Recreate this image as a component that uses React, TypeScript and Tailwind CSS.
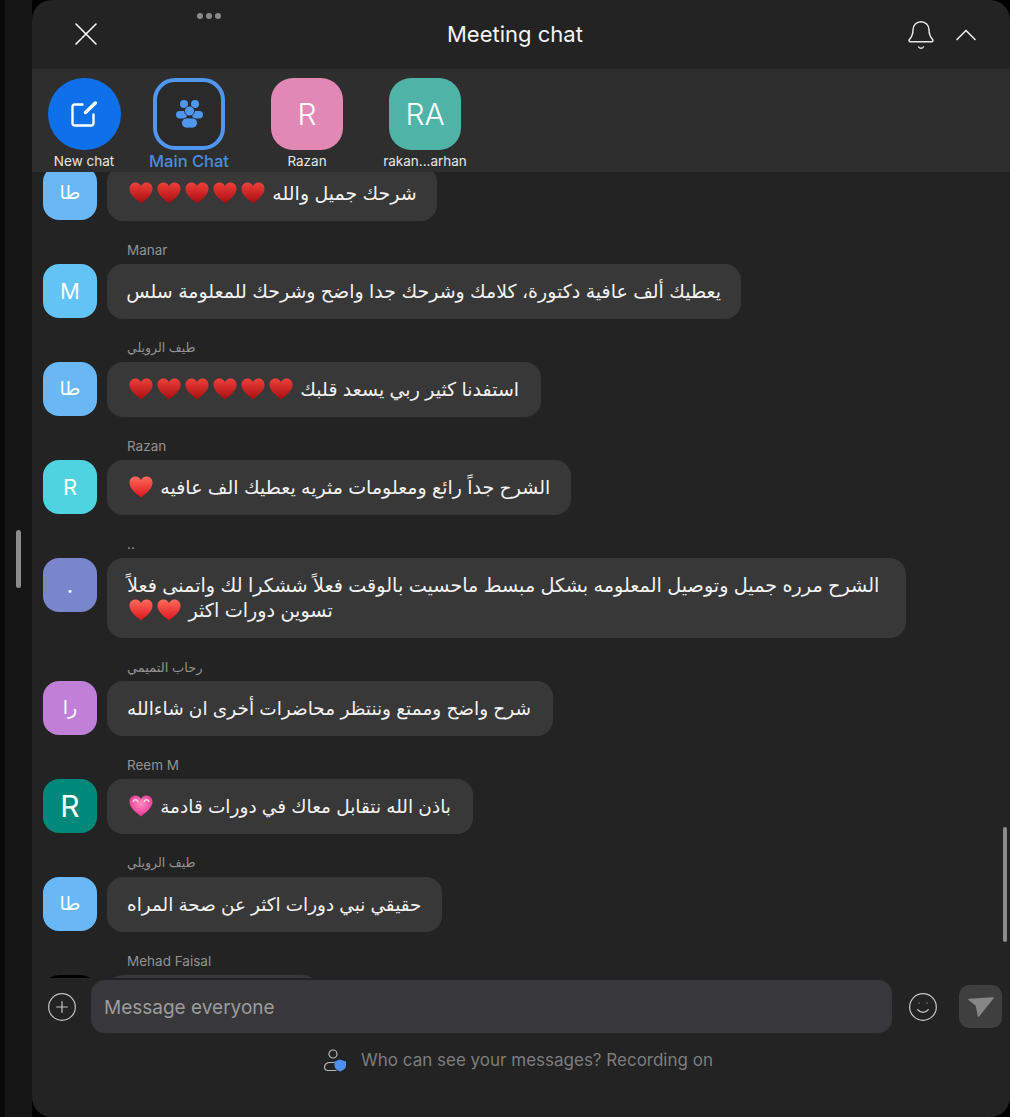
import { Bell, ChevronUp, CirclePlus, Smile } from "lucide-react";
import type { ReactNode } from "react";

const TEXT_FONT = "font-['Inter','Noto_Sans','DejaVu_Sans',sans-serif]";
const HEART_PATH =
  "M13 23.500C8.500 19.500 .5 14.500 .5 7.500 .5 3 3.500 .5 7 .5 9.800 .5 12 2 13 4.500 14 2 16.200 .5 19 .5 22.500 .5 25.500 3 25.500 7.500 25.500 14.500 17.500 19.500 13 23.500Z";

function Heart({ dark = false }: { dark?: boolean }) {
  const id = dark ? "heart-dark" : "heart-bright";
  return (
    <svg viewBox="-1 -1 28 26" className="mx-[1px] inline-block h-[24px] w-[26px] align-[-5px]">
      <defs>
        <linearGradient id={id} x1="0" y1="0" x2="0" y2="1">
          <stop offset="0" stopColor={dark ? "#f0403a" : "#ff6a5c"} />
          <stop offset="1" stopColor={dark ? "#a60d10" : "#dc151d"} />
        </linearGradient>
      </defs>
      <path d={HEART_PATH} fill={`url(#${id})`} />
    </svg>
  );
}

function PinkHeart() {
  return (
    <svg viewBox="-1 -1 28 26" className="mx-[1px] inline-block h-[24px] w-[26px] align-[-5px]">
      <defs>
        <radialGradient id="heart-pink" cx="0.5" cy="0.4" r="0.6">
          <stop offset="0" stopColor="#ff8cc3" />
          <stop offset="1" stopColor="#e8338c" />
        </radialGradient>
      </defs>
      <path d={HEART_PATH} fill="url(#heart-pink)" />
      <path d="M4.500 7C5.500 4.500 8.500 4.500 9.500 7M16.500 7C17.500 4.500 20.500 4.500 21.500 7" fill="none" stroke="#ffd3e6" strokeWidth="1.600" strokeLinecap="round" />
    </svg>
  );
}

function Message({
  name,
  nameClass = "text-[13.5px]",
  initial,
  initialClass = "text-[22px]",
  color,
  width,
  textClass = "text-[19px]",
  children,
}: {
  name?: string;
  nameClass?: string;
  initial: string;
  initialClass?: string;
  color: string;
  width: string;
  textClass?: string;
  children: ReactNode;
}) {
  return (
    <div className="mb-[21px]">
      {name && (
        <div className={`mb-[6px] ml-[95px] h-[16px] leading-[16px] text-[#929292] ${nameClass} ${TEXT_FONT}`}>
          {name}
        </div>
      )}
      <div className="ml-[11px] flex items-start gap-[10px]">
        <div
          className={`flex h-[54px] w-[54px] shrink-0 items-center justify-center rounded-[16px] text-white ${initialClass} ${color} ${TEXT_FONT}`}
        >
          {initial}
        </div>
        <div
          dir="rtl"
          className={`rounded-[16px] bg-[#383838] px-[20px] py-[15px] text-left leading-[25px] whitespace-nowrap text-[#f2f2f2] ${textClass} ${width} ${TEXT_FONT}`}
        >
          {children}
        </div>
      </div>
    </div>
  );
}

function TabItem({
  label,
  labelClass = "text-[13.5px] text-[#e6e6e6]",
  className = "",
  children,
}: {
  label: string;
  labelClass?: string;
  className?: string;
  children: ReactNode;
}) {
  return (
    <div className={`flex w-[72px] flex-col items-center ${className}`}>
      {children}
      <span className={`mt-[2px] leading-[18px] whitespace-nowrap ${labelClass}`}>{label}</span>
    </div>
  );
}

export default function App() {
  return (
    <div className="relative flex h-[1117px] w-[1010px] overflow-hidden bg-black font-['Inter',sans-serif]">
      {/* sidebar behind the panel */}
      <div className="h-full w-[5px] bg-[#0a0a0a]" />
      <div className="h-full w-[27px] bg-[#161616]" />
      <div className="absolute top-[530px] left-[16px] h-[58px] w-[5px] rounded-full bg-[#8c8c8c]" />

      <div className="relative flex h-full flex-1 flex-col overflow-hidden rounded-[20px] bg-[#232323]">
        {/* header */}
        <div className="relative flex h-[69px] shrink-0 items-center justify-between pr-[26px] pl-[42px]">
          <svg viewBox="0 0 24 24" className="mb-[2px] h-[24px] w-[24px]" fill="none" stroke="white" strokeWidth="1.600" strokeLinecap="round">
            <path d="M2 2 22 22M22 2 2 22" />
          </svg>
          <span className="absolute top-[18px] left-[415px] text-[22px] leading-[32px] text-[#f4f4f4]">Meeting chat</span>
          <div className="flex items-center gap-[11px]">
            <Bell size={32} strokeWidth={1.1} className="text-[#e8e8e8]" />
            <ChevronUp size={36} strokeWidth={1.1} className="text-[#e8e8e8]" />
          </div>
          <div className="absolute top-[13px] left-[165px] flex gap-[3px]">
            <span className="h-[6px] w-[6px] rounded-full bg-[#8a8a8a]" />
            <span className="h-[6px] w-[6px] rounded-full bg-[#8a8a8a]" />
            <span className="h-[6px] w-[6px] rounded-full bg-[#8a8a8a]" />
          </div>
        </div>

        {/* chat tabs */}
        <div className="flex h-[103px] shrink-0 bg-[#2e2e2e] pt-[9px] pl-[16px]">
          <TabItem label="New chat">
            <div className="flex h-[72px] w-[73px] shrink-0 items-center justify-center rounded-full bg-[#0e71eb]">
              <svg viewBox="0 0 26 26" className="h-[26px] w-[26px]" fill="none" stroke="white" strokeLinecap="round" strokeLinejoin="round">
                <path d="M11.500 3.500H4C2.500 3.500 1.500 4.500 1.500 6V22C1.500 23.500 2.500 24.500 4 24.500H20C21.500 24.500 22.500 23.500 22.500 22V13.500" strokeWidth="2.400" />
                <path d="M24.300 2 14.500 11.500" strokeWidth="3.400" />
              </svg>
            </div>
          </TabItem>
          <TabItem label="Main Chat" labelClass="text-[16.5px] font-medium text-[#4a8ddf]" className="ml-[33px]">
            <div className="flex h-[72px] w-[72px] items-center justify-center rounded-[22px] border-[4px] border-[#4f96ee] bg-[#2a2a2a]">
              <svg viewBox="0 0 27 28" className="h-[28px] w-[27px]">
                <circle cx="8" cy="4" r="4" fill="#4f96ee" />
                <circle cx="19" cy="4" r="4" fill="#4f96ee" />
                <rect x="0" y="11" width="11" height="7.500" rx="3.700" fill="#4f96ee" />
                <rect x="16" y="11" width="11" height="7.500" rx="3.700" fill="#4f96ee" />
                <circle cx="13.500" cy="11" r="5" fill="#4f96ee" stroke="#2a2a2a" strokeWidth="0.800" />
                <rect x="5.500" y="18" width="16" height="10" rx="5" fill="#4f96ee" stroke="#2a2a2a" strokeWidth="0.800" />
              </svg>
            </div>
          </TabItem>
          <TabItem label="Razan" className="ml-[46px]">
            <div className="flex h-[72px] w-[72px] items-center justify-center rounded-[22px] bg-[#e288b5] text-[30px] font-light text-white">R</div>
          </TabItem>
          <TabItem label="rakan...arhan" className="ml-[46px]">
            <div className="flex h-[72px] w-[72px] items-center justify-center rounded-[22px] bg-[#4fb3a7] text-[30px] font-light text-white">RA</div>
          </TabItem>
        </div>

        {/* messages */}
        <div className="relative h-[806px] shrink-0 overflow-hidden">
          <div className="-mt-[6px]">
            <Message initial="طا" initialClass="text-[19px]" color="bg-[#69b7f5]" width="w-[330px]">
              شرحك جميل والله <Heart dark /><Heart dark /><Heart dark /><Heart dark /><Heart dark />
            </Message>
            <Message name="Manar" initial="M" color="bg-[#62c3f5]" width="w-[634px]">
              يعطيك ألف عافية دكتورة، كلامك وشرحك جدا واضح وشرحك للمعلومة سلس
            </Message>
            <Message name="طيف الرويلي" nameClass="text-[12.5px]" initial="طا" initialClass="text-[19px]" color="bg-[#69b7f5]" width="w-[434px]">
              استفدنا كثير ربي يسعد قلبك <Heart dark /><Heart dark /><Heart dark /><Heart dark /><Heart dark /><Heart dark />
            </Message>
            <Message name="Razan" initial="R" color="bg-[#4fd3e0]" width="w-[464px]">
              الشرح جداً رائع ومعلومات مثريه يعطيك الف عافيه <Heart />
            </Message>
            <Message name=".." initial="." color="bg-[#7986cb]" width="w-[799px]" textClass="text-[19.2px]">
              الشرح مرره جميل وتوصيل المعلومه بشكل مبسط ماحسيت بالوقت فعلاً ششكرا لك واتمنى فعلاً
              <br />
              تسوين دورات اكثر <Heart /><Heart />
            </Message>
            <Message name="رحاب التميمي" nameClass="text-[13px]" initial="را" initialClass="text-[19px]" color="bg-[#c080d8]" width="w-[446px]" textClass="text-[18.5px]">
              شرح واضح وممتع وننتظر محاضرات أخرى ان شاءالله
            </Message>
            <Message name="Reem M" initial="R" initialClass="text-[30px]" color="bg-[#00897b]" width="w-[366px]" textClass="text-[18.5px]">
              باذن الله نتقابل معاك في دورات قادمة <PinkHeart />
            </Message>
            <Message name="طيف الرويلي" nameClass="text-[12.5px]" initial="طا" initialClass="text-[19px]" color="bg-[#69b7f5]" width="w-[335px]" textClass="text-[18.4px]">
              حقيقي نبي دورات اكثر عن صحة المراه
            </Message>
            <Message name="Mehad Faisal" initial="" color="bg-black" width="w-[212px]">
              <span className="block h-[25px]" />
            </Message>
          </div>
          <div className="absolute top-[655px] right-[3px] h-[115px] w-[4px] rounded-full bg-[#8c8c8c]" />
        </div>

        {/* composer */}
        <div className="flex shrink-0 items-center pt-[2px] pl-[14px]">
          <CirclePlus size={32} strokeWidth={0.9} className="text-[#c4c4c4]" />
          <div className="ml-[13px] flex h-[53px] w-[801px] items-center rounded-[14px] bg-[#38383a] pt-[3px] pl-[13px] text-[19px] text-[#9c9c9c]">
            Message everyone
          </div>
          <Smile size={32} strokeWidth={0.9} className="ml-[15px] text-[#c8c8c8]" />
          <div className="ml-[20px] flex h-[43px] w-[43px] items-center justify-center rounded-[10px] bg-[#3f3f3f]">
            <svg viewBox="0 0 26 20" className="h-[20px] w-[26px]" fill="#868686" stroke="#868686" strokeWidth="1.500" strokeLinejoin="round">
              <path d="M1 2.500 25 1 10.500 19 8.500 8.500Z" />
            </svg>
          </div>
        </div>

        {/* footer */}
        <div className="mt-[15px] ml-[291px] flex items-center">
          <svg viewBox="0 0 24 24" className="h-[24px] w-[24px]" fill="none">
            <circle cx="10" cy="6" r="4" stroke="#b8b8b8" strokeWidth="1.200" />
            <path d="M11 14.500H7C4 14.500 1.500 16.500 1.500 19S3 22.500 5 22.500H13" stroke="#b8b8b8" strokeWidth="1.200" strokeLinecap="round" />
            <path d="M17 11.500 23 13.500V17.500C23 20.500 20 22.500 17 23.500 14 22.500 11.500 20.500 11.500 17.500V13.500Z" fill="#4f8ff0" />
          </svg>
          <span className="ml-[14px] text-[17px] leading-[24px] text-[#7d7d7d]">Who can see your messages? Recording on</span>
        </div>
      </div>
    </div>
  );
}
